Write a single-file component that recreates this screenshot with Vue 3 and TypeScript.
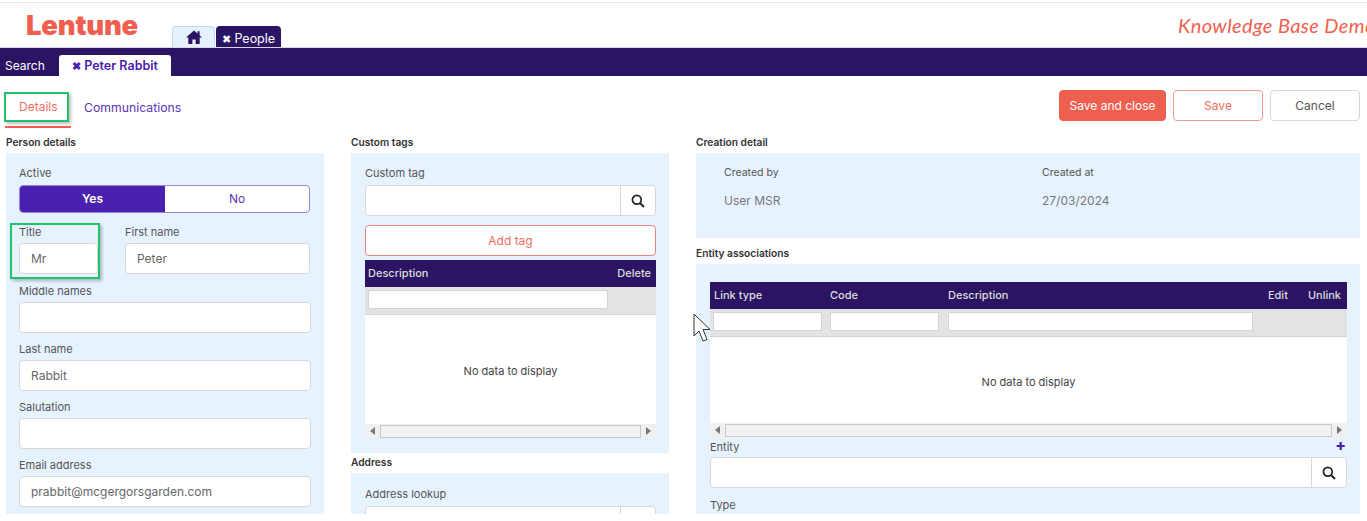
<template>
  <div class="page">
    <header class="top">
      <div class="logo">Lentune</div>
      <div class="app-tabs">
        <div class="app-tab home">
          <svg width="16" height="14" viewBox="0 0 16 14"><path d="M8 .5 0 7.400h2.300V14h4.100V9.400h3.200V14h4.100V7.400H16L13.600 5.300V1.300h-2v2.300Z" fill="#2a1463" /></svg>
        </div>
        <div class="app-tab active"><span><span class="x">✖</span> People</span></div>
      </div>
      <div class="strap">Knowledge Base Demo</div>
    </header>

    <nav class="bar">
      <span class="bar-item">Search</span>
      <span class="bar-tab"><span class="x">✖</span> Peter Rabbit</span>
    </nav>

    <div class="subhead">
      <div class="subtabs">
        <div class="subtab current"><span class="hl">Details</span></div>
        <div class="subtab">Communications</div>
      </div>
      <div class="actions">
        <button class="btn solid">Save and close</button>
        <button class="btn outline">Save</button>
        <button class="btn plain">Cancel</button>
      </div>
    </div>

    <main class="columns">
      <section class="col">
        <h4>Person details</h4>
        <div class="panel person">
          <label>Active</label>
          <div class="toggle">
            <div class="on">Yes</div>
            <div class="off">No</div>
          </div>
          <div class="name-row">
            <div class="title-field">
              <label>Title</label>
              <div class="input">Mr</div>
            </div>
            <div class="grow">
              <label>First name</label>
              <div class="input">Peter</div>
            </div>
          </div>
          <div v-for="f in personFields" :key="f.label" class="field">
            <label>{{ f.label }}</label>
            <div class="input">{{ f.value }}</div>
          </div>
        </div>
      </section>

      <section class="col">
        <h4>Custom tags</h4>
        <div class="panel tags">
          <label>Custom tag</label>
          <div class="lookup">
            <div class="lookup-input"></div>
            <div class="lookup-btn"><svg width="14" height="14" viewBox="0 0 14 14"><circle cx="5.800" cy="5.800" r="4.400" fill="none" stroke="#222" stroke-width="1.700" /><path d="m9 9 4 4" stroke="#222" stroke-width="2" /></svg></div>
          </div>
          <button class="add-tag">Add tag</button>
          <div class="grid">
            <div class="grid-head"><span class="grow">Description</span><span>Delete</span></div>
            <div class="grid-filter"><div class="filter-box desc"></div></div>
            <div class="grid-empty tag-empty">No data to display</div>
            <div class="scroll">
              <span class="arrow left"></span>
              <div class="thumb"></div>
              <span class="arrow right"></span>
            </div>
          </div>
        </div>
        <h4 class="second">Address</h4>
        <div class="panel address">
          <label>Address lookup</label>
          <div class="lookup">
            <div class="lookup-input"></div>
            <div class="lookup-btn"></div>
          </div>
        </div>
      </section>

      <section class="col wide">
        <h4>Creation detail</h4>
        <div class="panel creation">
          <div class="cell"><label>Created by</label><div class="val">User MSR</div></div>
          <div class="cell"><label>Created at</label><div class="val">27/03/2024</div></div>
        </div>
        <h4 class="entity-title">Entity associations</h4>
        <div class="panel entity">
          <div class="grid">
            <div class="grid-head entity-head">
              <span class="c1">Link type</span>
              <span class="c2">Code</span>
              <span class="grow">Description</span>
              <span class="c4">Edit</span>
              <span>Unlink</span>
            </div>
            <div class="grid-filter">
              <div class="filter-box b1"></div>
              <div class="filter-box b2"></div>
              <div class="filter-box b3"></div>
            </div>
            <div class="grid-empty entity-empty">No data to display</div>
            <div class="scroll">
              <span class="arrow left"></span>
              <div class="thumb"></div>
              <span class="arrow right"></span>
            </div>
          </div>
          <div class="entity-label"><label>Entity</label><span class="plus">✚</span></div>
          <div class="lookup">
            <div class="lookup-input"></div>
            <div class="lookup-btn"><svg width="14" height="14" viewBox="0 0 14 14"><circle cx="5.800" cy="5.800" r="4.400" fill="none" stroke="#222" stroke-width="1.700" /><path d="m9 9 4 4" stroke="#222" stroke-width="2" /></svg></div>
          </div>
          <label class="type-label">Type</label>
        </div>
      </section>
    </main>

    <svg class="cursor" width="20" height="30" viewBox="0 0 20 30"><path d="M1 1v22l5-5 4 10 4-1.500-4-10h7Z" fill="#fff" stroke="#333" stroke-width="1" /></svg>
  </div>
</template>

<script setup lang="ts">
const personFields = [
  { label: 'Middle names', value: '' },
  { label: 'Last name', value: 'Rabbit' },
  { label: 'Salutation', value: '' },
  { label: 'Email address', value: 'prabbit@mcgergorsgarden.com' }
]
</script>

<style>
html, body { background: #fff; overflow: hidden; }
</style>

<style scoped>
.page {
  position: relative;
  height: 514px;
  overflow: hidden;
  background: #fff;
  font-family: Inter, "Noto Sans", sans-serif;
  color: #555;
  font-size: 11px;
}

.top {
  display: flex;
  align-items: flex-end;
  height: 44px;
  margin-top: 2px;
  border-top: 1px solid #e8e8e8;
  border-bottom: 1px solid #d9d5e4;
}

.logo {
  width: 172px;
  align-self: flex-start;
  padding: 7px 0 0 26px;
  box-sizing: border-box;
  font-size: 27.500px;
  font-weight: 900;
  line-height: 30px;
  color: #ef5f4f;
  letter-spacing: -0.2px;
}

.app-tabs { display: flex; gap: 1px; }

.app-tab {
  display: flex;
  align-items: center;
  justify-content: center;
  height: 21px;
  box-sizing: border-box;
  border-radius: 4px 4px 0 0;
  font-size: 12.500px;
}

.home {
  width: 43px;
  background: #e6f1fe;
  border: 1px solid #bcd9f5;
  border-bottom: 0;
}

.active {
  width: 65px;
  padding-top: 3px;
  background: #2a1463;
  color: #fff;
}

.x { font-size: 11px; }

.strap {
  margin-left: auto;
  align-self: flex-start;
  padding-top: 8px;
  font-family: Lato, sans-serif;
  font-style: italic;
  font-size: 20px;
  line-height: 28px;
  letter-spacing: 0.4px;
  color: #ef5f4f;
  white-space: nowrap;
  width: 189px;
}

.bar {
  display: flex;
  align-items: flex-end;
  height: 28px;
  background: #2a1463;
  color: #fff;
  font-size: 12px;
}

.bar-item {
  width: 59px;
  padding-left: 5px;
  box-sizing: border-box;
  line-height: 21px;
}

.bar-tab {
  width: 112px;
  height: 21px;
  background: #fff;
  border-radius: 3px 3px 0 0;
  color: #4a20b0;
  font-weight: 600;
  font-size: 12.500px;
  text-align: center;
  line-height: 21px;
}

.subhead {
  display: flex;
  justify-content: space-between;
  padding: 14px 7px 0 5px;
  height: 38px;
}

.subtabs { display: flex; }

.subtab {
  padding-left: 13px;
  color: #5c35b5;
  font-size: 12.250px;
  line-height: 35px;
}

.subtab.current {
  width: 66px;
  height: 36px;
  padding: 0;
  font-size: 12px;
  color: #f0705f;
  border-bottom: 2px solid #ef5f4f;
}

.hl {
  display: block;
  box-sizing: border-box;
  width: 65px;
  height: 30px;
  margin: 2px 0 0 -1px;
  padding-left: 13px;
  line-height: 26px;
  border: 2px solid #1fc46a;
  box-shadow: 2px 2px 3px rgba(0, 0, 0, .25);
}

.actions { display: flex; gap: 7px; align-items: flex-start; }

.btn {
  height: 31px;
  box-sizing: border-box;
  border-radius: 4px;
  font: 12px Inter, sans-serif;
  white-space: nowrap;
  background: #fff;
}

.solid { width: 107px; background: #ef5f4f; color: #fff; border: 1px solid #ef5f4f; }
.outline { width: 90px; color: #ef6d5e; border: 1px solid #ef9c92; }
.plain { width: 90px; color: #555; border: 1px solid #d8d8d8; }

.columns {
  display: flex;
  padding: 8px 0 0 6px;
  align-items: flex-start;
}

.col { width: 318px; margin-right: 27px; }
.col.wide { width: 664px; margin: 0; }

h4 {
  margin: 0;
  height: 17px;
  font-size: 10.200px;
  line-height: 13px;
  font-weight: 600;
  color: #333;
}

.panel {
  background: #e7f2ff;
  box-sizing: border-box;
}

label {
  display: block;
  font-size: 11px;
  line-height: 14px;
  color: #555;
}

.person { padding: 13px 13px 30px; height: 361px; }

.toggle {
  display: flex;
  height: 28px;
  margin-top: 5px;
  width: 291px;
  box-sizing: border-box;
  border: 1px solid #9b85dd;
  border-radius: 4px;
  background: #fff;
  overflow: hidden;
  font-size: 12px;
  line-height: 26px;
  text-align: center;
}

.on { width: 145px; background: #4a20b0; color: #fff; font-weight: 600; }
.off { flex: 1; color: #5c35b5; }

.input {
  height: 31px;
  box-sizing: border-box;
  margin-top: 4px;
  padding-left: 11px;
  background: #fff;
  border: 1px solid #d8d8d8;
  border-radius: 4px;
  font-size: 12px;
  line-height: 29px;
  color: #666;
}

.name-row { display: flex; gap: 27px; margin-top: 12px; width: 291px; }
.grow { flex: 1; }
.title-field { width: 79px; position: relative; }

.title-field::after {
  content: '';
  position: absolute;
  left: -9px;
  top: -2px;
  width: 90px;
  height: 56px;
  border: 2px solid #1fc46a;
  box-sizing: border-box;
  box-shadow: 2px 2px 3px rgba(0, 0, 0, .25);
}

.field { margin-top: 9px; width: 292px; }
.name-row + .field { margin-top: 10px; }

.tags { padding: 13px 13px 0 14px; height: 300px; }

.lookup {
  display: flex;
  height: 31px;
  margin-top: 5px;
  background: #fff;
  border: 1px solid #d8d8d8;
  border-radius: 4px;
  box-sizing: border-box;
}

.lookup-input { flex: 1; }

.lookup-btn {
  width: 34px;
  display: flex;
  align-items: center;
  justify-content: center;
  border-left: 1px solid #d8d8d8;
}

.add-tag {
  display: block;
  width: 100%;
  height: 31px;
  margin: 9px 0 4px;
  background: #fff;
  border: 1px solid #e8867a;
  border-radius: 4px;
  color: #ef6d5e;
  font: 12px Inter, sans-serif;
}

.grid { background: #fff; }

.grid-head {
  display: flex;
  height: 27px;
  padding: 0 5px 0 3px;
  background: #2a1463;
  color: #ddd;
  font-size: 11px;
  font-weight: 500;
  line-height: 27px;
}

.entity-head { padding: 0 6px 0 4px; }

.grid-filter {
  display: flex;
  height: 28px;
  padding: 3px 3px 0;
  box-sizing: border-box;
  background: #e3e3e3;
  border-bottom: 1px solid #d4d4d4;
  gap: 8px;
}

.filter-box {
  height: 19px;
  background: #fff;
  border: 1px solid #d4d4d4;
  box-sizing: border-box;
}

.desc { width: 240px; }
.b1 { width: 109px; }
.b2 { width: 109px; margin-right: 1px; }
.b3 { width: 305px; }

.grid-empty {
  display: flex;
  align-items: center;
  justify-content: center;
  box-sizing: border-box;
  padding-top: 3px;
  font-size: 11px;
  color: #444;
}

.tag-empty { height: 109px; }
.entity-empty { height: 86px; }

.scroll {
  display: flex;
  align-items: center;
  height: 14px;
  background: #f0f0f0;
  padding: 0 5px;
  gap: 5px;
}

.thumb {
  flex: 1;
  height: 13px;
  background: #f2f2f2;
  border: 1px solid #c8c8c8;
  box-sizing: border-box;
}

.arrow { width: 0; height: 0; border-top: 4px solid transparent; border-bottom: 4px solid transparent; }
.arrow.left { border-right: 5px solid #777; }
.arrow.right { border-left: 5px solid #777; }

.second { margin-top: 3px; }

.address { height: 44px; padding: 14px 13px 0 14px; }

.creation {
  display: flex;
  height: 85px;
  padding: 13px 0 0 28px;
}

.cell { width: 318px; }
.cell label { font-size: 10.500px; }
.val { font-size: 12px; line-height: 15px; margin-top: 13px; color: #777; }

.entity-title { margin-top: 9px; }

.entity { height: 250px; padding: 18px 13px 0 14px; }

.c1 { width: 116px; }
.c2 { width: 118px; }
.c4 { width: 40px; }

.entity-label {
  display: flex;
  justify-content: space-between;
  margin-top: 3px;
}

.entity-label + .lookup { margin-top: 3px; }

.plus { color: #4a20b0; font-size: 11px; line-height: 12px; margin-right: 2px; }

.type-label { margin-top: 10px; }

.cursor { position: absolute; left: 693px; top: 313px; }
</style>
